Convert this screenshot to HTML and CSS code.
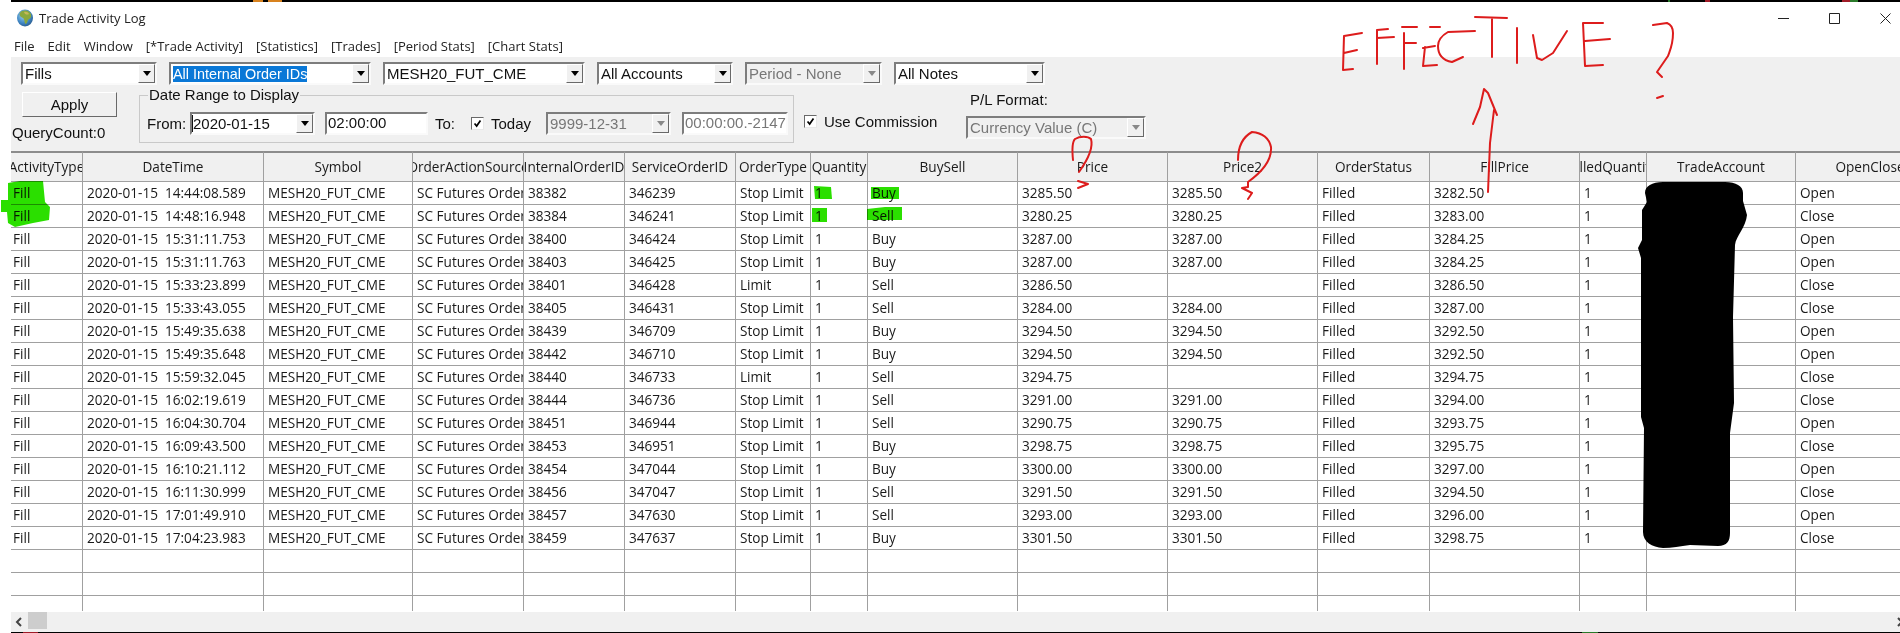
FILE: index.html
```html
<!DOCTYPE html>
<html lang="en">
<head>
<meta charset="utf-8">
<title>Trade Activity Log</title>
<link rel="stylesheet" href="styles.css">
</head>
<body>
<div class="window">
  <div class="topstrip"></div>
  <header class="titlebar">
    <div class="title">
      <svg class="globe" viewBox="0 0 16 18" aria-hidden="true">
        <defs>
          <radialGradient id="sea" cx="0.4" cy="0.35" r="0.75">
            <stop offset="0" stop-color="#9fd4ee"/>
            <stop offset="0.6" stop-color="#3f86c4"/>
            <stop offset="1" stop-color="#25507f"/>
          </radialGradient>
        </defs>
        <ellipse cx="8" cy="9" rx="8" ry="8.5" fill="url(#sea)"/>
        <path d="M4 2.500C7 1 11 1.200 13 3.500C15 6 14.500 9 12 10C10 11 11 14 8.500 15C7 13 8 10.500 6 9C4 8 2.500 7 2.500 5C3 4 3.500 3 4 2.500Z" fill="#8aa83c"/>
        <path d="M7 3C9 2.500 11 3 12 5C10.500 6 8 6 7 3Z" fill="#c7b85a"/>
      </svg>
      <span>Trade Activity Log</span>
    </div>
    <div class="winctl">
      <svg class="wc" viewBox="0 0 11 11" aria-hidden="true"><path d="M0 5.500H11"/></svg>
      <svg class="wc" viewBox="0 0 11 11" aria-hidden="true"><path d="M.5 .5H10.500V10.500H.5Z"/></svg>
      <svg class="wc" viewBox="0 0 11 11" aria-hidden="true"><path d="M.5 .5L10.500 10.500M10.500 .5L.5 10.500"/></svg>
    </div>
  </header>
  <nav class="menu">
    <span>File</span><span>Edit</span><span>Window</span><span>[*Trade Activity]</span><span>[Statistics]</span><span>[Trades]</span><span>[Period Stats]</span><span>[Chart Stats]</span>
  </nav>
  <section class="toolbar">
    <div class="filters">
      <div class="combo w-fills"><span class="val">Fills</span><span class="btn"><i></i></span></div>
      <div class="combo w-ids"><span class="val"><b class="sel">All Internal Order IDs</b></span><span class="btn"><i></i></span></div>
      <div class="combo w-ids"><span class="val">MESH20_FUT_CME</span><span class="btn"><i></i></span></div>
      <div class="combo w-acct"><span class="val">All Accounts</span><span class="btn"><i></i></span></div>
      <div class="combo w-period off"><span class="val">Period - None</span><span class="btn"><i></i></span></div>
      <div class="combo w-notes"><span class="val">All Notes</span><span class="btn"><i></i></span></div>
    </div>
    <div class="options">
      <div class="applycol">
        <div class="apply">Apply</div>
        <div class="qc">QueryCount:0</div>
      </div>
      <fieldset class="range">
        <legend>Date Range to Display</legend>
        <div class="rangerow">
          <span class="from">From:</span>
          <div class="combo w-date tight"><span class="val date-val">2020-01-15</span><span class="btn"><i></i></span></div>
          <div class="field w-time">02:00:00</div>
          <span class="to">To:</span>
          <span class="check"><svg viewBox="0 0 13 13" aria-hidden="true"><path d="M3 6.500L5.500 9.500L10 3"/></svg></span>
          <span class="today">Today</span>
          <div class="combo w-date off"><span class="val">9999-12-31</span><span class="btn"><i></i></span></div>
          <div class="field w-time2 off">00:00:00.-2147</div>
        </div>
      </fieldset>
      <div class="commission">
        <span class="check"><svg viewBox="0 0 13 13" aria-hidden="true"><path d="M3 6.500L5.500 9.500L10 3"/></svg></span>
        <span>Use Commission</span>
      </div>
      <div class="plcol">
        <div class="pllabel">P/L Format:</div>
        <div class="combo w-pl off"><span class="val">Currency Value (C)</span><span class="btn"><i></i></span></div>
      </div>
    </div>
  </section>
  <div class="gridwrap">
    <table class="grid">
      <colgroup>
        <col class="c72"><col class="c181"><col class="c149"><col class="c111"><col class="c101"><col class="c111"><col class="c75"><col class="c57"><col class="c150"><col class="c150"><col class="c150"><col class="c112"><col class="c150"><col class="c67"><col class="c149"><col class="c149">
      </colgroup>
      <thead>
        <tr><th><div>ActivityType</div></th><th><div>DateTime</div></th><th><div>Symbol</div></th><th><div>OrderActionSource</div></th><th><div>InternalOrderID</div></th><th><div>ServiceOrderID</div></th><th><div>OrderType</div></th><th><div>Quantity</div></th><th><div>BuySell</div></th><th><div>Price</div></th><th><div>Price2</div></th><th><div>OrderStatus</div></th><th><div>FillPrice</div></th><th><div>FilledQuantity</div></th><th><div>TradeAccount</div></th><th><div>OpenClose</div></th></tr>
      </thead>
      <tbody>
        <tr><td>Fill</td><td>2020-01-15  14:44:08.589</td><td>MESH20_FUT_CME</td><td>SC Futures Order</td><td>38382</td><td>346239</td><td>Stop Limit</td><td>1</td><td>Buy</td><td>3285.50</td><td>3285.50</td><td>Filled</td><td>3282.50</td><td>1</td><td></td><td>Open</td></tr>
        <tr><td>Fill</td><td>2020-01-15  14:48:16.948</td><td>MESH20_FUT_CME</td><td>SC Futures Order</td><td>38384</td><td>346241</td><td>Stop Limit</td><td>1</td><td>Sell</td><td>3280.25</td><td>3280.25</td><td>Filled</td><td>3283.00</td><td>1</td><td></td><td>Close</td></tr>
        <tr><td>Fill</td><td>2020-01-15  15:31:11.753</td><td>MESH20_FUT_CME</td><td>SC Futures Order</td><td>38400</td><td>346424</td><td>Stop Limit</td><td>1</td><td>Buy</td><td>3287.00</td><td>3287.00</td><td>Filled</td><td>3284.25</td><td>1</td><td></td><td>Open</td></tr>
        <tr><td>Fill</td><td>2020-01-15  15:31:11.763</td><td>MESH20_FUT_CME</td><td>SC Futures Order</td><td>38403</td><td>346425</td><td>Stop Limit</td><td>1</td><td>Buy</td><td>3287.00</td><td>3287.00</td><td>Filled</td><td>3284.25</td><td>1</td><td></td><td>Open</td></tr>
        <tr><td>Fill</td><td>2020-01-15  15:33:23.899</td><td>MESH20_FUT_CME</td><td>SC Futures Order</td><td>38401</td><td>346428</td><td>Limit</td><td>1</td><td>Sell</td><td>3286.50</td><td></td><td>Filled</td><td>3286.50</td><td>1</td><td></td><td>Close</td></tr>
        <tr><td>Fill</td><td>2020-01-15  15:33:43.055</td><td>MESH20_FUT_CME</td><td>SC Futures Order</td><td>38405</td><td>346431</td><td>Stop Limit</td><td>1</td><td>Sell</td><td>3284.00</td><td>3284.00</td><td>Filled</td><td>3287.00</td><td>1</td><td></td><td>Close</td></tr>
        <tr><td>Fill</td><td>2020-01-15  15:49:35.638</td><td>MESH20_FUT_CME</td><td>SC Futures Order</td><td>38439</td><td>346709</td><td>Stop Limit</td><td>1</td><td>Buy</td><td>3294.50</td><td>3294.50</td><td>Filled</td><td>3292.50</td><td>1</td><td></td><td>Open</td></tr>
        <tr><td>Fill</td><td>2020-01-15  15:49:35.648</td><td>MESH20_FUT_CME</td><td>SC Futures Order</td><td>38442</td><td>346710</td><td>Stop Limit</td><td>1</td><td>Buy</td><td>3294.50</td><td>3294.50</td><td>Filled</td><td>3292.50</td><td>1</td><td></td><td>Open</td></tr>
        <tr><td>Fill</td><td>2020-01-15  15:59:32.045</td><td>MESH20_FUT_CME</td><td>SC Futures Order</td><td>38440</td><td>346733</td><td>Limit</td><td>1</td><td>Sell</td><td>3294.75</td><td></td><td>Filled</td><td>3294.75</td><td>1</td><td></td><td>Close</td></tr>
        <tr><td>Fill</td><td>2020-01-15  16:02:19.619</td><td>MESH20_FUT_CME</td><td>SC Futures Order</td><td>38444</td><td>346736</td><td>Stop Limit</td><td>1</td><td>Sell</td><td>3291.00</td><td>3291.00</td><td>Filled</td><td>3294.00</td><td>1</td><td></td><td>Close</td></tr>
        <tr><td>Fill</td><td>2020-01-15  16:04:30.704</td><td>MESH20_FUT_CME</td><td>SC Futures Order</td><td>38451</td><td>346944</td><td>Stop Limit</td><td>1</td><td>Sell</td><td>3290.75</td><td>3290.75</td><td>Filled</td><td>3293.75</td><td>1</td><td></td><td>Open</td></tr>
        <tr><td>Fill</td><td>2020-01-15  16:09:43.500</td><td>MESH20_FUT_CME</td><td>SC Futures Order</td><td>38453</td><td>346951</td><td>Stop Limit</td><td>1</td><td>Buy</td><td>3298.75</td><td>3298.75</td><td>Filled</td><td>3295.75</td><td>1</td><td></td><td>Close</td></tr>
        <tr><td>Fill</td><td>2020-01-15  16:10:21.112</td><td>MESH20_FUT_CME</td><td>SC Futures Order</td><td>38454</td><td>347044</td><td>Stop Limit</td><td>1</td><td>Buy</td><td>3300.00</td><td>3300.00</td><td>Filled</td><td>3297.00</td><td>1</td><td></td><td>Open</td></tr>
        <tr><td>Fill</td><td>2020-01-15  16:11:30.999</td><td>MESH20_FUT_CME</td><td>SC Futures Order</td><td>38456</td><td>347047</td><td>Stop Limit</td><td>1</td><td>Sell</td><td>3291.50</td><td>3291.50</td><td>Filled</td><td>3294.50</td><td>1</td><td></td><td>Close</td></tr>
        <tr><td>Fill</td><td>2020-01-15  17:01:49.910</td><td>MESH20_FUT_CME</td><td>SC Futures Order</td><td>38457</td><td>347630</td><td>Stop Limit</td><td>1</td><td>Sell</td><td>3293.00</td><td>3293.00</td><td>Filled</td><td>3296.00</td><td>1</td><td></td><td>Open</td></tr>
        <tr><td>Fill</td><td>2020-01-15  17:04:23.983</td><td>MESH20_FUT_CME</td><td>SC Futures Order</td><td>38459</td><td>347637</td><td>Stop Limit</td><td>1</td><td>Buy</td><td>3301.50</td><td>3301.50</td><td>Filled</td><td>3298.75</td><td>1</td><td></td><td>Close</td></tr>
        <tr><td></td><td></td><td></td><td></td><td></td><td></td><td></td><td></td><td></td><td></td><td></td><td></td><td></td><td></td><td></td><td></td></tr>
        <tr><td></td><td></td><td></td><td></td><td></td><td></td><td></td><td></td><td></td><td></td><td></td><td></td><td></td><td></td><td></td><td></td></tr>
        <tr><td></td><td></td><td></td><td></td><td></td><td></td><td></td><td></td><td></td><td></td><td></td><td></td><td></td><td></td><td></td><td></td></tr>
      </tbody>
    </table>
  </div>
  <div class="hscroll">
    <svg class="chev" viewBox="0 0 8 10" aria-hidden="true"><path d="M6 1L2 5L6 9"/></svg>
    <div class="thumb"></div>
    <svg class="chev end" viewBox="0 0 8 10" aria-hidden="true"><path d="M2 1L6 5L2 9"/></svg>
  </div>
  <div class="bottomstrip"></div>
</div>
<svg class="ink" viewBox="0 0 1900 633" aria-hidden="true">
  <g class="bits">
    <rect class="b-orange" x="253" y="0" width="10" height="2"/>
    <rect class="b-orange" x="268" y="0" width="14" height="2"/>
    <rect class="b-green" x="1668" y="0" width="2" height="2"/>
    <rect class="b-red" x="1705" y="0" width="5" height="2"/>
    <rect class="b-red" x="1842" y="0" width="8" height="2"/>
    <rect class="b-green" x="1850" y="0" width="8" height="2"/>
    <rect class="b-red" x="23" y="632" width="15" height="1"/>
    <rect class="b-green" x="1582" y="632" width="16" height="1"/>
  </g>
  <g class="hl">
    <path d="M8 183L20 181L43 181L45 202L50 207L49 220L33 223L15 227L8 223L7 212L1 212L1 200L8 200Z"/>
    <path d="M814 186L831 187L832 199L815 199Z"/>
    <path d="M812 208L827 208L827 222L812 222Z"/>
    <path d="M871 187L899 187L899 199L871 199Z"/>
    <path d="M867 209L885 207L902 207L902 220L867 220Z"/>
  </g>
  <path class="redact" d="M1645 193C1645 186 1652 182 1663 182L1725 182C1736 182 1743 186 1743 193L1743 201L1747 215C1746 227 1736 236 1735 245L1733 317L1734 403L1730 433L1730 533C1730 541 1727 546 1718 546L1690 545C1680 546 1672 548 1663 548C1652 547 1643 542 1643 532L1644 428L1641 417L1641 258L1638 248L1642 240L1642 210L1647 202Z"/>
  <g class="pen">
    <path d="M1362 33L1344 36L1343 70L1353 69M1344 53L1357 50"/>
    <path d="M1377 30L1377 64M1377 38L1394 37M1377 30L1388 29"/>
    <path d="M1404 33L1404 69M1404 43L1416 43M1402 27L1417 27"/>
    <path d="M1430 27L1440 27M1425 47L1423 66L1437 65M1423 48L1435 46"/>
    <path d="M1475 31L1448 32C1441 36 1438 40 1438 46C1438 54 1441 60 1452 62L1463 57"/>
    <path d="M1475 17L1507 18M1492 18L1492 57"/>
    <path d="M1517 28L1517 63"/>
    <path d="M1533 35L1537 58L1542 60L1553 53L1567 31"/>
    <path d="M1603 23L1583 23L1585 66L1603 65M1585 41L1610 39"/>
    <path d="M1653 25L1667 23C1672 25 1673 29 1673 33C1673 45 1670 50 1668 56L1657 72L1662 77"/>
    <path d="M1657 98L1663 96"/>
    <path d="M1473 124L1480 107L1484 89L1488 93L1497 115M1494 110L1490 143L1488 192"/>
    <path d="M1073 160C1072 150 1072 142 1075 139C1080 136 1088 136 1091 139C1093 146 1089 158 1079 172M1078 181L1088 184L1078 188"/>
    <path d="M1238 160C1238 148 1241 138 1252 132C1262 133 1269 138 1271 147C1272 160 1262 172 1248 182L1248 187L1242 188L1252 193L1248 199"/>
  </g>
</svg>
</body>
</html>
```
FILE: styles.css
```css
* { box-sizing: border-box; }
html, body { margin: 0; padding: 0; }
body {
  width: 1900px;
  height: 633px;
  overflow: hidden;
  background: #fff;
  color: #111;
  position: relative;
  font-family: "Open Sans", "Noto Sans", sans-serif;
}
.window {
  margin-left: 11px;
  height: 633px;
  display: flex;
  flex-direction: column;
}
.topstrip { height: 2px; background: #000; flex: none; }
.bottomstrip { height: 1px; background: #000; flex: none; }

.titlebar {
  flex: none;
  height: 33px;
  display: flex;
  justify-content: space-between;
  align-items: center;
}
.title {
  display: flex;
  align-items: center;
  gap: 6px;
  padding-left: 6px;
  margin-top: -1px;
  font-size: 13px;
  color: #222;
}
.globe { width: 16px; height: 18px; }
.winctl {
  display: flex;
  gap: 40px;
  padding-right: 9px;
  margin-top: -1px;
}
.wc { width: 11px; height: 11px; }
.wc path { fill: none; stroke: #222; stroke-width: 1; }

.menu {
  flex: none;
  height: 22px;
  display: flex;
  align-items: center;
  gap: 13px;
  padding-left: 3px;
  font-size: 13px;
  color: #222;
}

.toolbar {
  flex: none;
  height: 94px;
  background: #f0f0f0;
  font-family: "Liberation Sans", Arial, sans-serif;
  font-size: 15px;
  color: #111;
}
.filters {
  display: flex;
  gap: 12px;
  padding: 5px 0 0 10px;
}
.combo {
  height: 23px;
  display: flex;
  align-items: center;
  justify-content: space-between;
  background: #fff;
  border: 2px solid;
  border-color: #7d7d7d #fafafa #fafafa #7d7d7d;
  padding-left: 2px;
  flex: none;
}
.combo.tight { padding-left: 0; }
.val { white-space: nowrap; overflow: hidden; flex: 1; min-width: 0; }
.date-val { border-left: 1px solid #111; }
.sel { background: #0a78d7; color: #fff; font-weight: 400; font-size: 14.400px; }
.btn {
  width: 17px;
  height: 19px;
  flex: none;
  background: #f0f0f0;
  border: 1px solid;
  border-color: #fff #696969 #696969 #fff;
  display: flex;
  align-items: center;
  justify-content: center;
}
.btn i {
  width: 0;
  height: 0;
  border-left: 4.500px solid transparent;
  border-right: 4.500px solid transparent;
  border-top: 5px solid #000;
}
.off { background: #f0f0f0; color: #777; }
.off .btn i { border-top-color: #888; }
.w-fills { width: 136px; }
.w-ids { width: 202px; }
.w-acct { width: 136px; }
.w-period { width: 137px; }
.w-notes { width: 151px; }
.w-date { width: 125px; }
.w-pl { width: 180px; }

.options {
  display: flex;
  align-items: flex-start;
  padding-top: 2px;
}
.applycol { width: 128px; flex: none; padding: 5px 0 0 1px; }
.apply {
  margin-left: 10px;
  width: 95px;
  height: 25px;
  background: #f0f0f0;
  border: 1px solid;
  border-color: #fff #696969 #696969 #fff;
  display: flex;
  align-items: center;
  justify-content: center;
}
.qc { margin-top: 7px; }

.range {
  margin: 0;
  width: 655px;
  height: 56px;
  flex: none;
  padding: 0 0 0 7px;
  border: 1px solid #c9c9c9;
}
.range legend { padding: 0 1px; margin-left: 1px; line-height: 16px; }
.rangerow {
  display: flex;
  align-items: center;
  padding-top: 9px;
}
.from { width: 43px; flex: none; }
.field {
  height: 23px;
  flex: none;
  background: #fff;
  border: 2px solid;
  border-color: #7d7d7d #fafafa #fafafa #7d7d7d;
  padding-left: 1px;
  line-height: 18px;
  white-space: nowrap;
  overflow: hidden;
}
.w-time { width: 103px; margin-left: 10px; }
.to { margin-left: 7px; width: 36px; flex: none; }
.check {
  width: 13px;
  height: 13px;
  flex: none;
  background: #fff;
  border: 1px solid;
  border-color: #696969 #e8e8e8 #e8e8e8 #696969;
  display: flex;
}
.check svg { width: 11px; height: 11px; }
.check path { fill: none; stroke: #000; stroke-width: 2; }
.today { margin-left: 7px; width: 55px; flex: none; }
.w-time2 { width: 106px; margin-left: 11px; }

.commission {
  display: flex;
  align-items: center;
  gap: 7px;
  margin: 26px 0 0 10px;
  width: 162px;
  flex: none;
  white-space: nowrap;
}
.plcol { flex: none; }
.pllabel { margin: 5px 0 8px 4px; line-height: 16px; }

.gridwrap {
  flex: none;
  height: 460px;
  overflow: hidden;
  background: #fff;
}
.grid {
  width: 1934px;
  table-layout: fixed;
  border-collapse: separate;
  border-spacing: 0;
  font-size: 13.600px;
  color: #1a1a1a;
}
.c72 { width: 72px; }
.c181 { width: 181px; }
.c149 { width: 149px; }
.c111 { width: 111px; }
.c101 { width: 101px; }
.c75 { width: 75px; }
.c57 { width: 57px; }
.c150 { width: 150px; }
.c112 { width: 112px; }
.c67 { width: 67px; }
.grid th {
  height: 31px;
  padding: 0 0 2px;
  font-weight: 400;
  background: #f0f0f0;
  border-top: 2px solid #8c8c8c;
  border-right: 1px solid #a0a0a0;
  border-bottom: 1px solid #a0a0a0;
}
.grid th div {
  display: flex;
  justify-content: center;
  overflow: hidden;
  white-space: nowrap;
}
.grid td {
  height: 23px;
  padding: 0 0 1px 4px;
  border-right: 1px solid #a0a0a0;
  border-bottom: 1px solid #a0a0a0;
  white-space: pre;
  overflow: hidden;
  line-height: 19px;
}
.grid td:first-child { padding-left: 2px; }

.hscroll {
  flex: none;
  height: 20px;
  margin-top: 1px;
  background: #f0f0f0;
  display: flex;
  align-items: flex-start;
  padding-left: 4px;
}
.chev { width: 8px; height: 10px; margin-top: 5px; flex: none; }
.chev path { fill: none; stroke: #444; stroke-width: 2; }
.thumb { width: 19px; height: 17px; margin-left: 5px; background: #cdcdcd; flex: none; }
.chev.end { margin-left: auto; margin-right: -4px; }

.ink {
  position: absolute;
  left: 0;
  top: 0;
  width: 1900px;
  height: 633px;
  pointer-events: none;
}
.b-orange { fill: #d8821e; }
.b-green { fill: #2a7a2a; }
.b-red { fill: #a01c28; }
.hl path { fill: #2bdf00; mix-blend-mode: multiply; }
.redact { fill: #000; }
.pen path {
  fill: none;
  stroke: #dd1c1c;
  stroke-width: 2;
  stroke-linecap: round;
  stroke-linejoin: round;
}
```
